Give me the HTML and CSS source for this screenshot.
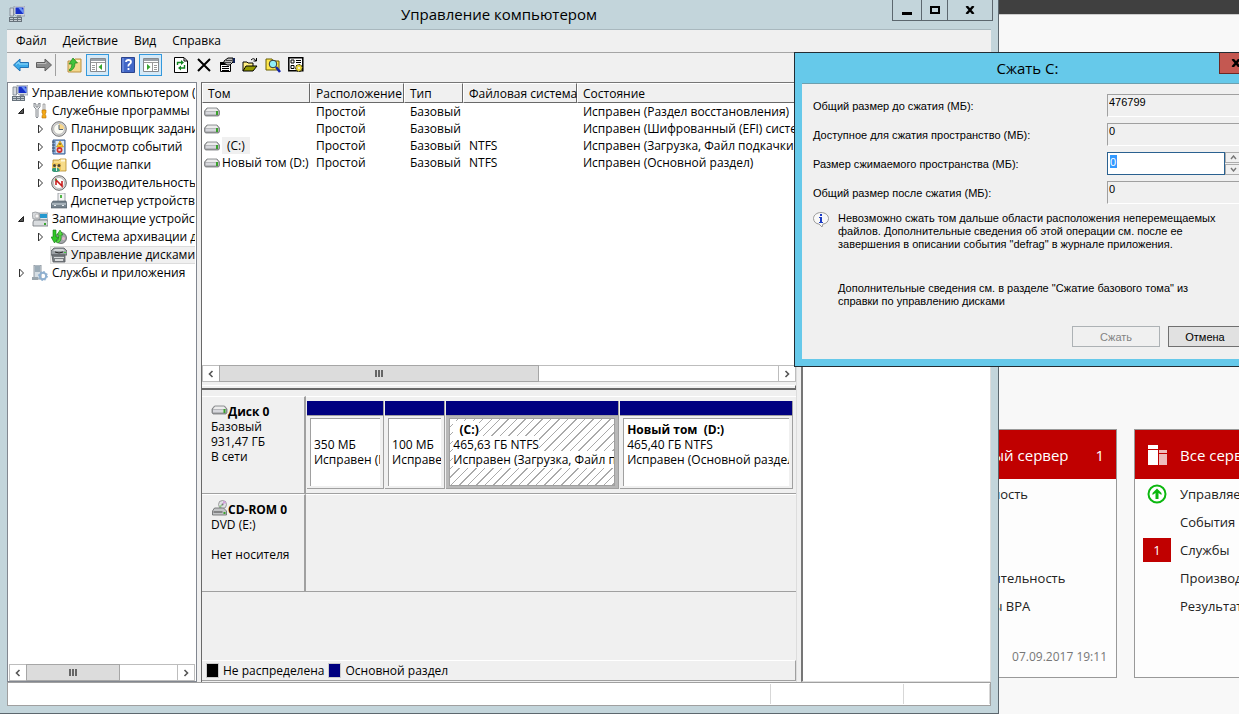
FILE: index.html
```html
<!DOCTYPE html>
<html lang="ru">
<head>
  <meta charset="utf-8">
  <title>Управление компьютером</title>
  <link rel="stylesheet" href="styles.css">
</head>
<body>
<svg class="sprite" width="0" height="0">
  <symbol id="i-computer" viewBox="0 0 16 16">
    <path d="M5 0h11v10H7L5 8z" fill="#d6dbe0" stroke="#7b8594" stroke-width=".6"/>
    <path d="M6.500 1.500h8v6.500h-8z" fill="#1730c8"/>
    <path d="M9 1.500h3l2.500 3V8z" fill="#6a92f4"/>
    <path d="M1 2h3.500v8H1z" fill="#d5d9de" stroke="#77808c" stroke-width=".8"/>
    <path d="M8 9h4v2H8z" fill="#8c949e"/>
    <path d="M0 11h13v5H0z" fill="#68737c"/>
    <path d="M1 12h3v1H1zM5 12h3v1H5zM9 12h3v1H9zM1 14h3v1H1zM5 14h3v1H5zM9 14h3v1H9z" fill="#c5cdd2"/>
  </symbol>
  <symbol id="i-tools" viewBox="0 0 16 16">
    <path d="M2 0v4l2 2v8q1 2 2 0V6l2-2V0L6 1v3H4V1z" fill="#eef0f2" stroke="#6c7177" stroke-width=".8"/>
    <path d="M11 1h2v6h-2z" fill="#eee" stroke="#777" stroke-width=".6"/>
    <path d="M10 7h4v3l-1 1 1 2v2h-4v-2l1-2-1-1z" fill="#f4a916" stroke="#b8730a" stroke-width=".6"/>
  </symbol>
  <symbol id="i-clock" viewBox="0 0 16 16">
    <circle cx="8" cy="8" r="7.300" fill="#d4d4d4" stroke="#777"/>
    <circle cx="8" cy="8" r="5.300" fill="#fbfbf4" stroke="#999" stroke-width=".5"/>
    <path d="M8 8V2.700A5.300 5.300 0 0 1 13.300 8z" fill="#f8d78b"/>
    <path d="M8 4v4.500h4" fill="none" stroke="#567" stroke-width="1"/>
  </symbol>
  <symbol id="i-events" viewBox="0 0 16 16">
    <path d="M2 1h12v14H2z" fill="#8fb3dc" stroke="#3d5f92"/>
    <path d="M1 3h3M1 6h3M1 9h3M1 12h3" stroke="#374965"/>
    <path d="M5 2h8v12H5z" fill="#d8e6f5"/>
    <path d="M9 2l3.500 6h-7z" fill="#ffca2a" stroke="#bd8500" stroke-width=".6"/>
    <path d="M9 4v2" stroke="#333"/>
    <circle cx="8.500" cy="11" r="3" fill="#d02f2c"/>
    <path d="M7.500 10l2 2m0-2l-2 2" stroke="#fff"/>
  </symbol>
  <symbol id="i-shared" viewBox="0 0 16 16">
    <path d="M2 3h6l1-1h6v12H2z" fill="#f7dc8a" stroke="#b58b2a" stroke-width=".8"/>
    <path d="M10 2.500h4v2h-4z" fill="#fff8dc"/>
    <path d="M1 6h9v8H1z" fill="#efc75c"/>
    <circle cx="3.500" cy="8.500" r="1.500" fill="#4d4535"/><circle cx="8" cy="8.500" r="1.500" fill="#4d4535"/>
    <path d="M1 14q0-4 3-3 4-1 5 3l-3 1H3z" fill="#359b7b"/>
    <path d="M5.500 9v5" stroke="#e9ede8"/>
  </symbol>
  <symbol id="i-perf" viewBox="0 0 16 16">
    <circle cx="8" cy="8" r="7.300" fill="#ddd" stroke="#666"/>
    <circle cx="8" cy="8" r="5.500" fill="#fff" stroke="#888" stroke-width=".5"/>
    <path d="M5 10V5l6 6V6" fill="none" stroke="#c91e1e" stroke-width="1.600"/>
    <path d="M4 5.500l2-1.500" stroke="#2a9a2a" stroke-width="1"/>
  </symbol>
  <symbol id="i-devices" viewBox="0 0 16 16">
    <path d="M7 0h7v9H7z" fill="#f4f4f4" stroke="#8d9399" stroke-width=".8"/>
    <path d="M9 2h2v3H9z" fill="#51b548"/>
    <path d="M2 8h13l1 3v4H0v-4z" fill="#77848e" stroke="#4c5862" stroke-width=".6"/>
    <path d="M1 11h14" stroke="#d7dfe4"/>
    <path d="M3 12h2v1H3zM11 12h2v1h-2z" fill="#e8edf0"/>
  </symbol>
  <symbol id="i-storage" viewBox="0 0 16 16">
    <path d="M7 2h9v7H7z" fill="#dfe5ea" stroke="#808a92" stroke-width=".7"/>
    <path d="M8 3h7v4H8z" fill="#2398cf"/>
    <path d="M0 2q3-2 7 0l1 6H1z" fill="#d6d9dc" stroke="#868a8e" stroke-width=".7"/>
    <circle cx="5" cy="5" r="2" fill="#f6f6f6" stroke="#999" stroke-width=".5"/>
    <path d="M2 9h13l1 2v4H1v-4z" fill="#d9dcdf" stroke="#70757a" stroke-width=".8"/>
    <path d="M12 12h2v2h-2z" fill="#38a62f"/>
  </symbol>
  <symbol id="i-backup" viewBox="0 0 16 16">
    <circle cx="10" cy="9" r="5.500" fill="#a4a7aa" stroke="#5d6063" stroke-width=".8"/>
    <circle cx="12.500" cy="9.500" r="1.500" fill="#e6b4cf"/>
    <path d="M2 1v7H0l3.500 6L8 8H5V1z" fill="#30c927" stroke="#127712" stroke-width=".6"/>
    <path d="M7 14q4-2 3-8h2L9 1 6 6h2q0 5-3 7z" fill="#56d942" stroke="#168016" stroke-width=".6"/>
  </symbol>
  <symbol id="i-diskmgmt" viewBox="0 0 16 16">
    <path d="M3 1h10l3 3v4H0V4z" fill="#9da2a6" stroke="#52575b" stroke-width=".8"/>
    <path d="M4 2h8l2 2H2z" fill="#d3d6d8"/>
    <path d="M1 8h13v7H2z" fill="#7a7f83" stroke="#55595d" stroke-width=".8"/>
    <path d="M3 10h10v1H3zM4 12h8v2H4z" fill="#d9dbdc"/>
    <path d="M4 5q4 2 8 0" stroke="#222" fill="none"/>
    <path d="M13 5h2v1h-2z" fill="#3cc93a"/>
  </symbol>
  <symbol id="i-services" viewBox="0 0 16 16">
    <path d="M2 0h7v14H2z" fill="#d6dee4" stroke="#78848d" stroke-width=".8"/>
    <path d="M3 2h5M3 4h5M3 6h5" stroke="#637a8b"/>
    <path d="M0 12h6v3H0z" fill="#9aa5ad"/>
    <circle cx="11" cy="11" r="3.200" fill="none" stroke="#8fb0d0" stroke-width="2"/>
    <circle cx="11" cy="11" r="4.500" fill="none" stroke="#8fb0d0" stroke-dasharray="1.700 1.800"/>
  </symbol>
  <symbol id="i-drive" viewBox="0 0 16 10">
    <path d="M3 1h10l2.500 3v3.500l-1 1.500h-13l-1-1.500V4z" fill="#97999b" stroke="#77797b" stroke-width=".8"/>
    <path d="M3.500 1.500h9l2 2.500H1.500z" fill="#ececec"/>
    <path d="M1.500 4.500h13v3h-13z" fill="#d6d7dc"/>
    <path d="M12 4h2v4h-2z" fill="#39a22c"/>
  </symbol>
  <symbol id="i-cdrom" viewBox="0 0 16 16">
    <circle cx="11" cy="4.500" r="4" fill="#dfe1e4" stroke="#888" stroke-width=".8"/>
    <path d="M11 4.500l1-4 3 2z" fill="#d5a1dc"/><path d="M11 4.500L7.500 6 9 8z" fill="#8ccf81"/>
    <circle cx="11" cy="4.500" r="1" fill="#777"/>
    <path d="M3 8h9l3 3v4H1v-4z" fill="#c3c5c7" stroke="#626466" stroke-width=".8"/>
    <path d="M2 12h9" stroke="#444"/><path d="M12 12h2v2h-2z" fill="#39a22c"/>
  </symbol>
  <symbol id="i-closed" viewBox="0 0 8 10"><path d="M2.500 1v8l4-4z" fill="#fff" stroke="#333"/></symbol>
  <symbol id="i-opened" viewBox="0 0 8 10"><path d="M6.500 2.500v5h-5z" fill="#555" stroke="#222"/></symbol>
  <symbol id="i-left" viewBox="0 0 8 8"><path d="M5.500 1L2.500 4l3 3" fill="none" stroke="#555" stroke-width="1.600"/></symbol>
  <symbol id="i-right" viewBox="0 0 8 8"><path d="M2.500 1l3 3-3 3" fill="none" stroke="#555" stroke-width="1.600"/></symbol>
</svg>

<div class="desktop">
  <main class="dashboard">
    <div class="dash-top"></div>
    <div class="tiles">
      <section class="tile">
        <h2 class="tile-head"><span></span><span class="tile-title">Локальный сервер</span><span>1</span></h2>
        <ul class="tile-list">
          <li><span></span>Управляемость</li>
          <li><span></span>События</li>
          <li><span></span>Службы</li>
          <li><span></span>Производительность</li>
          <li><span></span>Результаты BPA</li>
        </ul>
        <time class="tile-time">07.09.2017 19:11</time>
      </section>
      <section class="tile">
        <h2 class="tile-head">
          <svg width="20" height="20" viewBox="0 0 20 20"><path d="M0 0h10v4H0zM0 5h10v15H0z" fill="#fff"/><path d="M11 5h8v3h-8zM11 9h8v11h-8z" fill="#eebcbc"/></svg>
          <span class="tile-title">Все серверы</span><span>1</span>
        </h2>
        <ul class="tile-list">
          <li><span><svg width="20" height="20" viewBox="0 0 20 20"><circle cx="10" cy="10" r="8.500" fill="#fff" stroke="#0bb70f" stroke-width="2"/><path d="M10 4.500l4.500 4.500v2L11.500 9v6h-3V9l-3 2V9z" fill="#0bb70f"/></svg></span>Управляемость</li>
          <li><span></span>События</li>
          <li><span><b class="count">1</b></span>Службы</li>
          <li><span></span>Производительность</li>
          <li><span></span>Результаты BPA</li>
        </ul>
      </section>
    </div>
  </main>

  <div class="window">
    <header class="titlebar">
      <svg class="title-icon" width="16" height="16"><use href="#i-computer"/></svg>
      <h1 class="title">Управление компьютером</h1>
      <div class="win-buttons">
        <button class="min" aria-label="Свернуть"><svg width="10" height="10"><path d="M0 7h10v3H0z"/></svg></button>
        <button class="max" aria-label="Развернуть"><svg width="10" height="8"><path d="M1 1h8v6H1z" fill="none" stroke="#000" stroke-width="2"/></svg></button>
        <button class="close" aria-label="Закрыть"><svg width="10" height="8"><path d="M1.500 0l7 8M8.500 0l-7 8" stroke="#000" stroke-width="2.400"/></svg></button>
      </div>
    </header>

    <div class="client">
      <nav class="menubar">
        <button>Файл</button><button>Действие</button><button>Вид</button><button>Справка</button>
      </nav>
      <div class="toolbar">
        <div class="tools">
          <button aria-label="Назад"><svg width="16" height="14"><path d="M.5 7L7 1v3.500h8.500v5H7V13z" fill="#3ba9e8" stroke="#2371b3"/><path d="M3 6.500l3-2.500v2h9" fill="none" stroke="#96dbfb"/></svg></button>
          <button aria-label="Вперед"><svg width="16" height="14"><path d="M15.500 7L9 1v3.500H.5v5H9V13z" fill="#8c8c8c" stroke="#5f5f5f"/><path d="M1 5.500h9V4" fill="none" stroke="#bbb"/></svg></button>
        </div>
        <i class="sep"></i>
        <div class="tools">
          <button aria-label="Вверх"><svg width="16" height="16"><path d="M1 4h5l2-2h6v13H1z" fill="#f3d88d" stroke="#bc9140"/><path d="M9 3h4v2H9z" fill="#fff2c8"/><path d="M3 14q5-2 5-8h2.500L6 1 2 7h3q0 4-3 6z" fill="#43c33c" stroke="#1b831b" stroke-width=".7"/></svg></button>
          <button class="on" aria-label="Дерево консоли"><svg width="16" height="16"><path d="M.5 1.500h15v13H.5z" fill="#fff" stroke="#85898e"/><path d="M1 2h14v2H1z" fill="#9aa0a7"/><path d="M1 5.500h14M2 8.500h3M2 10.500h3M2 12.500h3M6.500 6v8" stroke="#999"/><path d="M12 7v6l-3.500-3z" fill="#35a42c"/></svg></button>
        </div>
        <div class="tools">
          <button aria-label="Справка"><svg width="14" height="16" viewBox="0 0 14 16"><path d="M.5.5h13v15H.5z" fill="#4166c6" stroke="#2b438d"/><path d="M2 1v14" stroke="#88a5ea"/><path d="M5 5q0-2 2.500-2T10 5q0 1-1.500 2T7.500 9.500M7.500 11v2" fill="none" stroke="#fff" stroke-width="1.800"/></svg></button>
          <button class="on" aria-label="Область действий"><svg width="16" height="16"><path d="M.5 1.500h15v13H.5z" fill="#fff" stroke="#85898e"/><path d="M1 2h14v2H1z" fill="#9aa0a7"/><path d="M1 5.500h14M11 8.500h3M11 10.500h3M11 12.500h3M9.500 6v8" stroke="#999"/><path d="M4 7v6l3.500-3z" fill="#35a42c"/></svg></button>
        </div>
        <div class="tools">
          <button aria-label="Обновить"><svg width="14" height="16"><path d="M.5.5h9.500l3.500 3.500v11.500H.5z" fill="#fff" stroke="#000"/><path d="M10 1v3h3" fill="none" stroke="#000"/><path d="M3.500 8V5.500h4M10.500 8v3H6.500" fill="none" stroke="#118420" stroke-width="1.400"/><path d="M7 3l3 2.500L7 8zM7 8.500L4 11l3 2.500z" fill="#118420"/></svg></button>
          <button aria-label="Удалить"><svg width="14" height="14"><path d="M1 1l12 12M13 1L1 13" stroke="#000" stroke-width="2"/></svg></button>
          <button aria-label="Свойства"><svg width="16" height="16"><path d="M1.500 5.500h10v9h-10z" fill="#fff" stroke="#000"/><path d="M1 5h10v3H1z"/><path d="M3 9.500h7M3 11.500h7M3 13.500h7" stroke="#000"/><path d="M5 4l4-3h5v4l-3 3H8L5 6z" fill="#bbb" stroke="#000"/><path d="M7 3.500h6M6 5.500h6" stroke="#444"/><path d="M14 1h2v5h-2z" fill="#125"/></svg></button>
          <button aria-label="Открыть"><svg width="16" height="16"><path d="M1 14V5h4l1 1h5v3" fill="#ffef83" stroke="#000"/><path d="M1 14l3-5h11l-4 5z" fill="#969c00" stroke="#000"/><path d="M9 3q3-3 5 1M14.500 1v3h-3" fill="none" stroke="#000"/></svg></button>
          <button aria-label="Найти"><svg width="16" height="16"><path d="M1 2h6l1 2h6v9H1z" fill="#ffe74c" stroke="#665c00"/><circle cx="8" cy="7" r="3.800" fill="#8feef8" stroke="#333"/><path d="M11 10l4 5" stroke="#1325a8" stroke-width="2.500"/></svg></button>
          <button aria-label="Параметры"><svg width="16" height="16"><path d="M.8.8h14v13H.8z" fill="#fff" stroke="#000" stroke-width="1.500"/><path d="M3 3h3v3H3zM3 8.500h3v3H3z" fill="#fff" stroke="#000"/><path d="M8 3.500h5M8 5.500h5M8 8.500h3" stroke="#000"/><circle cx="11" cy="11" r="3.400" fill="#e9d63c" stroke="#000" stroke-dasharray="2 1"/><circle cx="11" cy="11" r="1" fill="#fff"/></svg></button>
        </div>
      </div>

      <div class="panes">
        <div class="pane tree-pane">
          <ul class="tree">
            <li class="lv0"><svg class="ic" width="16" height="16"><use href="#i-computer"/></svg><a href="#">Управление компьютером (локальным)</a></li>
            <li class="lv1"><svg class="tw" width="8" height="10"><use href="#i-opened"/></svg><svg class="ic" width="16" height="16"><use href="#i-tools"/></svg><a href="#">Служебные программы</a></li>
            <li class="lv2"><svg class="tw" width="8" height="10"><use href="#i-closed"/></svg><svg class="ic" width="16" height="16"><use href="#i-clock"/></svg><a href="#">Планировщик заданий</a></li>
            <li class="lv2"><svg class="tw" width="8" height="10"><use href="#i-closed"/></svg><svg class="ic" width="16" height="16"><use href="#i-events"/></svg><a href="#">Просмотр событий</a></li>
            <li class="lv2"><svg class="tw" width="8" height="10"><use href="#i-closed"/></svg><svg class="ic" width="16" height="16"><use href="#i-shared"/></svg><a href="#">Общие папки</a></li>
            <li class="lv2"><svg class="tw" width="8" height="10"><use href="#i-closed"/></svg><svg class="ic" width="16" height="16"><use href="#i-perf"/></svg><a href="#">Производительность</a></li>
            <li class="lv2"><span class="tw"></span><svg class="ic" width="16" height="16"><use href="#i-devices"/></svg><a href="#">Диспетчер устройств</a></li>
            <li class="lv1"><svg class="tw" width="8" height="10"><use href="#i-opened"/></svg><svg class="ic" width="16" height="16"><use href="#i-storage"/></svg><a href="#">Запоминающие устройства</a></li>
            <li class="lv2"><svg class="tw" width="8" height="10"><use href="#i-closed"/></svg><svg class="ic" width="16" height="16"><use href="#i-backup"/></svg><a href="#">Система архивации данных</a></li>
            <li class="lv2"><span class="tw"></span><span class="current"><svg class="ic" width="16" height="16"><use href="#i-diskmgmt"/></svg><a href="#">Управление дисками</a></span></li>
            <li class="lv1"><svg class="tw" width="8" height="10"><use href="#i-closed"/></svg><svg class="ic" width="16" height="16"><use href="#i-services"/></svg><a href="#">Службы и приложения</a></li>
          </ul>
          <div class="scroll">
            <button aria-label="Влево"><svg width="8" height="8"><use href="#i-left"/></svg></button>
            <div class="track"><div class="thumb tree-thumb"><i></i><i></i><i></i></div></div>
            <button aria-label="Вправо"><svg width="8" height="8"><use href="#i-right"/></svg></button>
          </div>
        </div>

        <div class="pane disk-pane">
          <div class="volumes">
            <table>
              <colgroup><col class="c-vol"><col class="c-layout"><col class="c-type"><col class="c-fs"><col class="c-state"></colgroup>
              <thead>
                <tr><th>Том</th><th>Расположение</th><th>Тип</th><th>Файловая система</th><th>Состояние</th></tr>
              </thead>
              <tbody>
                <tr><td><svg width="16" height="10"><use href="#i-drive"/></svg></td><td>Простой</td><td>Базовый</td><td></td><td>Исправен (Раздел восстановления)</td></tr>
                <tr><td><svg width="16" height="10"><use href="#i-drive"/></svg></td><td>Простой</td><td>Базовый</td><td></td><td>Исправен (Шифрованный (EFI) системный раздел)</td></tr>
                <tr><td><svg width="16" height="10"><use href="#i-drive"/></svg><span class="picked">(C:)</span></td><td>Простой</td><td>Базовый</td><td>NTFS</td><td>Исправен (Загрузка, Файл подкачки, Аварийный дамп)</td></tr>
                <tr><td><svg width="16" height="10"><use href="#i-drive"/></svg><span>Новый том (D:)</span></td><td>Простой</td><td>Базовый</td><td>NTFS</td><td>Исправен (Основной раздел)</td></tr>
              </tbody>
            </table>
          </div>
          <div class="scroll">
            <button aria-label="Влево"><svg width="8" height="8"><use href="#i-left"/></svg></button>
            <div class="track"><div class="thumb vol-thumb"><i></i><i></i><i></i></div></div>
            <button aria-label="Вправо"><svg width="8" height="8"><use href="#i-right"/></svg></button>
          </div>
          <div class="splitter"></div>

          <div class="disks">
            <section class="disk">
              <div class="disk-info">
                <h3><svg width="17" height="10"><use href="#i-drive"/></svg>Диск 0</h3>
                <p>Базовый</p><p>931,47 ГБ</p><p>В сети</p>
              </div>
              <div class="parts">
                <div class="part p-rec"><div class="box"><p>&nbsp;</p><p>350 МБ</p><p>Исправен (Раздел)</p></div></div>
                <div class="part p-efi"><div class="box"><p>&nbsp;</p><p>100 МБ</p><p>Исправен</p></div></div>
                <div class="part p-big selected"><div class="box"><p><b>&nbsp;&nbsp;(C:)</b></p><p><span>465,63 ГБ NTFS</span></p><p><span>Исправен (Загрузка, Файл подкачки)</span></p></div></div>
                <div class="part p-big"><div class="box"><p><b>Новый том&nbsp; (D:)</b></p><p>465,40 ГБ NTFS</p><p>Исправен (Основной раздел)</p></div></div>
              </div>
            </section>
            <section class="disk">
              <div class="disk-info">
                <h3><svg width="17" height="16"><use href="#i-cdrom"/></svg>CD-ROM 0</h3>
                <p>DVD (E:)</p><p>&nbsp;</p><p>Нет носителя</p>
              </div>
              <div class="parts"></div>
            </section>
          </div>
          <div class="legend">
            <i class="swatch"></i>Не распределена
            <i class="swatch primary"></i>Основной раздел
          </div>
        </div>

        <div class="pane actions-pane"></div>
      </div>

      <footer class="statusbar"><span></span><span></span><span></span></footer>
    </div>
  </div>

  <form class="dialog">
    <header class="dialog-title">
      <h2>Сжать C:</h2>
      <button type="button" aria-label="Закрыть"><svg width="10" height="8"><path d="M1.500 0l7 8M8.500 0l-7 8" stroke="#000" stroke-width="2.400"/></svg></button>
    </header>
    <div class="dialog-body">
      <div class="fields">
        <label for="total">Общий размер до сжатия (МБ):</label>
        <input id="total" value="476799" readonly>
        <label for="avail">Доступное для сжатия пространство (МБ):</label>
        <input id="avail" value="0" readonly>
        <label for="size">Размер сжимаемого пространства (МБ):</label>
        <div class="spin">
          <span class="spin-value"><input id="size" value="0"></span>
          <div class="spin-buttons">
            <button type="button" aria-label="Больше"><svg width="7" height="5"><path d="M1 4l2.500-3L6 4" fill="none" stroke="#777" stroke-width="1.400"/></svg></button>
            <button type="button" aria-label="Меньше"><svg width="7" height="5"><path d="M1 1l2.500 3L6 1" fill="none" stroke="#777" stroke-width="1.400"/></svg></button>
          </div>
        </div>
        <label for="after">Общий размер после сжатия (МБ):</label>
        <input id="after" value="0" readonly>
      </div>
      <div class="note">
        <svg width="16" height="16"><path d="M8 .5c4 0 7.500 2.500 7.500 6 0 3-2.500 5.500-5.500 5.500L9 15l-3-3C3 12 .5 9.500.5 6.500.5 3 4 .5 8 .5z" fill="#f8f8f8" stroke="#999"/><path d="M7 2h2v2H7zM6 5h3v5h1v1H6v-1h1V6H6z" fill="#1c3cc4"/></svg>
        <div>
          <p>Невозможно сжать том дальше области расположения неперемещаемых<br>файлов. Дополнительные сведения об этой операции см. после ее<br>завершения в описании события "defrag" в журнале приложения.</p>
          <p>Дополнительные сведения см. в разделе "Сжатие базового тома" из<br>справки по управлению дисками</p>
        </div>
      </div>
      <div class="dialog-buttons">
        <button type="submit" class="shrink" disabled>Сжать</button>
        <button type="button">Отмена</button>
      </div>
    </div>
  </form>
</div>
</body>
</html>
```
FILE: styles.css
```css
* {
  box-sizing: border-box;
}
body {
  margin: 0;
  font-family: "Open Sans", "Noto Sans", sans-serif;
  font-size: 12px;
  color: #000;
  background: #f8f8f8;
}
h1, h2, h3, p, ul {
  margin: 0;
  padding: 0;
  font-weight: normal;
}
ul {
  list-style: none;
}
a {
  color: inherit;
  text-decoration: none;
}
button, input {
  font: inherit;
  color: inherit;
  margin: 0;
  padding: 0;
  border: 0;
  border-radius: 0;
  background: none;
}
svg {
  display: block;
  flex: none;
}
.sprite {
  position: absolute;
}
.desktop {
  position: relative;
  height: 100vh;
  overflow: hidden;
}

/* server manager behind the windows */
.dash-top {
  height: 15px;
  background: #404040;
  border-bottom: 1px solid #ccc;
}
.tiles {
  display: flex;
  justify-content: flex-end;
  gap: 17px;
  padding-top: 414px;
  margin-right: -128px;
}
.tile {
  flex: none;
  width: 233px;
  height: 249px;
  display: flex;
  flex-direction: column;
  border: 1px solid #999;
  background: #fdfdfd;
  color: #222;
  font-size: 13px;
}
.tile-head {
  display: grid;
  grid-template-columns: 20px 1fr auto;
  align-items: center;
  column-gap: 12px;
  height: 49px;
  padding: 0 12px 0 13px;
  background: #c00000;
  color: #fff;
  font-size: 15px;
}
.tile-title {
  white-space: nowrap;
}
.tile-list {
  padding-top: 1px;
}
.tile-list li {
  display: grid;
  grid-template-columns: 28px 1fr;
  column-gap: 9px;
  align-items: center;
  height: 28px;
  padding-left: 8px;
}
.tile-list span {
  display: grid;
  justify-items: center;
}
.count {
  width: 28px;
  line-height: 24px;
  text-align: center;
  font-weight: normal;
  color: #fff;
  background: #c00000;
}
.tile-time {
  margin-top: auto;
  padding: 0 9px 12px;
  text-align: right;
  font-size: 12px;
  color: #777;
}

/* main window */
.window {
  position: absolute;
  top: 0;
  left: 0;
  right: 240px;
  bottom: 0;
  display: flex;
  flex-direction: column;
  padding: 0 7px 7px;
  background: #c3d5db;
  border-right: 1px solid #5c676e;
  border-bottom: 1px solid #5c676e;
}
.titlebar {
  display: grid;
  grid-template-columns: 101px 1fr 101px;
  height: 29px;
  margin: 0 -2px;
}
.title-icon {
  margin: 6px 4px;
}
.title {
  text-align: center;
  font-size: 15px;
  line-height: 29px;
}
.win-buttons {
  display: flex;
  height: 21px;
  border: 1px solid #5c676e;
  border-top: 0;
}
.win-buttons button {
  display: grid;
  place-items: center;
  width: 28px;
}
.win-buttons button + button {
  border-left: 1px solid #5c676e;
}
.win-buttons .max {
  width: 26px;
}
.win-buttons .close {
  flex: 1;
}
.client {
  flex: 1;
  min-height: 0;
  display: flex;
  flex-direction: column;
  border-top: 1px solid #a9b8be;
  background: #f0f0f0;
}
.menubar {
  display: flex;
  gap: 16px;
  height: 23px;
  padding: 0 9px 1px;
  border-bottom: 1px solid #a5a5a5;
}
.toolbar {
  display: flex;
  gap: 7px;
  height: 29px;
  padding: 1px 2px;
}
.tools {
  display: flex;
}
.toolbar button {
  display: grid;
  place-items: center;
  width: 23px;
  height: 22px;
}
.toolbar button.on {
  background: #d5e9f7;
  border: 1px solid #3399dd;
}
.sep {
  width: 1px;
  height: 22px;
  margin-left: -7px;
  background: #a0a0a0;
}
.panes {
  flex: 1;
  min-height: 0;
  display: grid;
  grid-template-columns: 190px minmax(0, 1fr) 190px;
  gap: 4px;
}
.pane {
  min-width: 0;
  min-height: 0;
  display: flex;
  flex-direction: column;
}

.tree-pane {
  padding: 0 1px;
  background: #fff;
  border: 1px solid #828790;
}
.tree {
  flex: 1;
  padding-top: 1px;
  overflow: hidden;
}
.tree li {
  display: flex;
  align-items: center;
  height: 18px;
  line-height: 16px;
  white-space: nowrap;
}
.tree a {
  padding: 0 4px;
}
.lv0 {
  padding-left: 3px;
}
.lv1 {
  padding-left: 8px;
}
.lv2 {
  padding-left: 27px;
}
.tw {
  flex: none;
  width: 8px;
  margin-right: 7px;
}
.current {
  display: flex;
  outline: 1px solid #dcdcdc;
  background: #f0f0f0;
}

.scroll {
  display: flex;
  flex: none;
  height: 17px;
  background: #fff;
  border: 1px solid #bdbdbd;
}
.scroll button {
  width: 16px;
  display: grid;
  place-items: center;
}
.track {
  flex: 1;
  border: solid #bdbdbd;
  border-width: 0 1px;
}
.thumb {
  display: flex;
  align-items: center;
  justify-content: center;
  gap: 1px;
  height: 15px;
  background: #dcdcdc;
  outline: 1px solid #a6a6a6;
}
.thumb i {
  width: 2px;
  height: 7px;
  background: #666;
}
.tree-thumb {
  width: 61%;
}
.vol-thumb {
  width: 57%;
}

.disk-pane {
  border-left: 1px solid #696969;
  border-top: 1px solid #767676;
  border-right: 1px solid #ddd;
}
.volumes {
  height: 282px;
  overflow: hidden;
  background: #fff;
}
.volumes table {
  width: 700px;
  table-layout: fixed;
  border-collapse: separate;
  border-spacing: 0;
}
.c-vol { width: 108px; }
.c-layout { width: 94px; }
.c-type { width: 59px; }
.c-fs { width: 114px; }
.volumes th {
  height: 20px;
  padding: 0 0 0 5px;
  text-align: left;
  font-weight: normal;
  white-space: nowrap;
  background: #f0f0f0;
  border: solid;
  border-color: #fff #696969 #696969 #fff;
  border-width: 1px;
}
.volumes td {
  height: 17px;
  line-height: 17px;
  padding: 0 0 0 6px;
  white-space: nowrap;
}
.volumes td:first-child {
  display: flex;
  align-items: center;
  gap: 2px;
  padding-left: 2px;
}
.picked {
  padding: 0 5px;
  background: #f0f0f0;
}
.splitter {
  height: 5px;
  margin: 3px 0 6px;
  border: solid;
  border-color: #fff #696969 #696969 #fff;
  border-width: 1px 1px 2px 0;
}

.disks {
  flex: 1;
  min-height: 0;
  line-height: 15px;
}
.disk {
  display: flex;
  height: 98px;
  white-space: nowrap;
}
.disk-info {
  flex: none;
  width: 104px;
  padding: 7px 0 0 9px;
  border: solid;
  border-color: #fff #a0a0a0 #a0a0a0 #fff;
  border-width: 1px 2px 1px 0;
}
.disk-info h3 {
  display: flex;
  align-items: flex-end;
  font-size: 12px;
  font-weight: bold;
}
.disk-info h3 svg {
  align-self: center;
  margin-top: -4px;
}
.parts {
  flex: 1;
  min-width: 0;
  display: flex;
  gap: 1px;
  padding: 4px 3px 4px 1px;
  border-top: 1px solid #fff;
  border-bottom: 1px solid #a0a0a0;
}
.part {
  flex: 1 1 0;
  min-width: 0;
  display: flex;
  flex-direction: column;
  padding-bottom: 2px;
  border: solid #a0a0a0;
  border-width: 0 1px 1px 0;
}
.part::before {
  content: "";
  height: 14px;
  background: #000080;
  border-bottom: 1px solid #a0a0a0;
}
.p-rec { flex-grow: 77; }
.p-efi { flex-grow: 60; }
.p-big { flex-grow: 174; }
.box {
  flex: 1;
  margin: 2px 3px 0;
  padding: 3px 3px;
  overflow: hidden;
  background: #fff;
  border: solid #a0a0a0;
  border-width: 1px 0 0 1px;
}
.selected {
  background: #b8b8b8;
}
.selected .box {
  border-width: 1px;
  background: repeating-linear-gradient(135deg, #fff 0 5px, #aaa 5px 6px);
}
.selected b, .selected span {
  background: #fff;
}
.legend {
  display: flex;
  align-items: center;
  gap: 5px;
  height: 21px;
  padding-left: 5px;
  border: solid;
  border-color: #fff #a0a0a0 #a0a0a0;
  border-width: 1px 1px 1px 0;
  margin-bottom: 1px;
}
.swatch {
  width: 11px;
  height: 13px;
  background: #000;
  outline: 1px solid #ccc;
}
.primary {
  background: #000080;
}
.actions-pane {
  background: #fff;
  border: solid;
  border-color: #767676 #ddd #ddd #767676;
  border-width: 1px 1px 1px 2px;
}
.statusbar {
  display: grid;
  grid-template-columns: 1fr 133px 86px;
  height: 24px;
  padding: 1px 0;
  background: #fff;
  border: 1px solid #a0a0a0;
}
.statusbar span {
  border-right: 1px solid #d7d7d7;
}

/* shrink volume dialog */
.dialog {
  position: absolute;
  top: 52px;
  left: 794px;
  width: 467px;
  padding: 0 7px 7px;
  background: #66c9ea;
  border: 1px solid #222c33;
  font-family: "Liberation Sans", Arial, sans-serif;
  font-size: 11px;
}
.dialog-title {
  display: grid;
  grid-template-columns: 34px 1fr 34px;
  height: 30px;
}
.dialog-title h2 {
  grid-column: 2;
  text-align: center;
  font-family: "Open Sans", "Noto Sans", sans-serif;
  font-size: 15px;
  line-height: 30px;
}
.dialog-title button {
  display: grid;
  place-items: center;
  height: 21px;
  background: #c45851;
  border: 1px solid #6d2723;
  border-top: 0;
}
.dialog-body {
  padding: 10px 11px 12px;
  background: #f0f0f0;
  border-top: 1px solid #6d9fae;
}
.fields {
  display: grid;
  grid-template-columns: 1fr 135px;
  gap: 6px;
  align-items: center;
}
.fields > input {
  height: 23px;
  padding: 0 0 7px 1px;
  border: solid;
  border-color: #a0a0a0 #fff #fff #a0a0a0;
  border-width: 1px;
}
.spin {
  display: flex;
  height: 23px;
}
.spin-value {
  width: 118px;
  padding: 2px;
  background: #fff;
  border: 1px solid #2a6190;
}
.spin-value input {
  display: block;
  width: 7px;
  height: 13px;
  color: #fff;
  background: #3399ff;
}
.spin-buttons {
  display: grid;
  gap: 1px;
  width: 17px;
}
.spin-buttons button {
  display: grid;
  place-items: center;
  border: 1px solid #acacac;
}
.note {
  display: flex;
  gap: 9px;
  margin-top: 8px;
  line-height: 13px;
}
.note p + p {
  margin-top: 31px;
}
.dialog-buttons {
  display: flex;
  gap: 8px;
  justify-content: flex-end;
  margin-top: 18px;
}
.dialog-buttons button {
  width: 74px;
  height: 21px;
  background: #e1e1e1;
  border: 1px solid #707070;
}
.dialog-buttons .shrink {
  width: 88px;
}
.dialog-buttons button:disabled {
  color: #838383;
  background: #f0f0f0;
  border-color: #adb2b5;
}
```
